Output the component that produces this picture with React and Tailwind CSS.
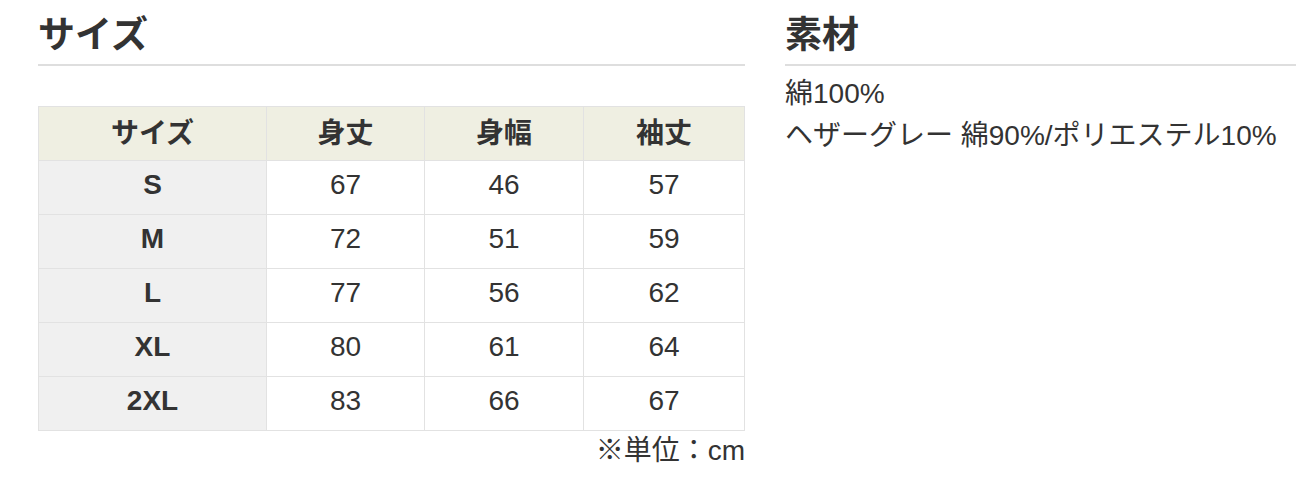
const rows = [
  ["S", 67, 46, 57],
  ["M", 72, 51, 59],
  ["L", 77, 56, 62],
  ["XL", 80, 61, 64],
  ["2XL", 83, 66, 67],
];

const font = { fontFamily: '"Liberation Sans", "Noto Sans CJK JP", sans-serif' };

export default function App() {
  return (
    <div className="flex gap-10 pl-[38px] pt-[12px] text-[#333] bg-white min-h-[484px]" style={font}>
      {/* サイズ */}
      <section className="w-[707px]">
        <h2 className="text-[37px] font-bold leading-[48px] pb-[4px] border-b-2 border-[#dedede]">サイズ</h2>
        <table className="w-full mt-[40px] border-collapse text-[28px] text-center">
          <thead>
            <tr className="bg-[#efefe2] h-[54px]">
              <th className="w-[228px] border border-[#e2e2e2] font-bold">サイズ</th>
              <th className="w-[158px] border border-[#e2e2e2] font-bold">身丈</th>
              <th className="w-[159px] border border-[#e2e2e2] font-bold">身幅</th>
              <th className="border border-[#e2e2e2] font-bold">袖丈</th>
            </tr>
          </thead>
          <tbody>
            {rows.map(([size, a, b, c]) => (
              <tr key={size} className="h-[54px]">
                <td className="bg-[#f0f0f0] border border-[#e2e2e2] font-bold pb-[5px]">{size}</td>
                <td className="border border-[#e2e2e2] pb-[5px]">{a}</td>
                <td className="border border-[#e2e2e2] pb-[5px]">{b}</td>
                <td className="border border-[#e2e2e2] pb-[5px]">{c}</td>
              </tr>
            ))}
          </tbody>
        </table>
        <p className="text-right text-[28px] leading-[40px]">※単位：cm</p>
      </section>

      {/* 素材 */}
      <section className="flex-1">
        <h2 className="text-[37px] font-bold leading-[48px] pb-[4px] border-b-2 border-[#dedede]">素材</h2>
        <div className="text-[28px] leading-[42px] mt-[7px]">
          <p>綿100%</p>
          <p>ヘザーグレー 綿90%/ポリエステル10%</p>
        </div>
      </section>
    </div>
  );
}
